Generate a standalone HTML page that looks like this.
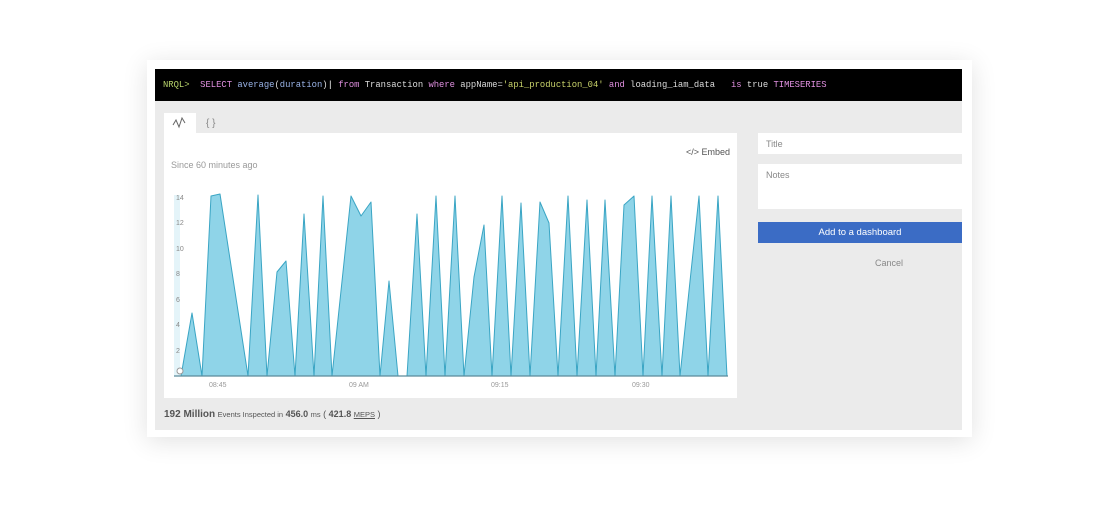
<!DOCTYPE html>
<html><head><style>
body{margin:0;width:1120px;height:529px;background:#fff;position:relative;overflow:hidden;font-family:"Liberation Sans",sans-serif}
.card{position:absolute;left:147px;top:60px;width:825px;height:377px;background:#fff;box-shadow:0 4px 24px rgba(0,0,0,.12)}
.bar{position:absolute;left:155px;top:69px;width:807px;height:32px;background:#000;font-family:"Liberation Mono",monospace;font-size:8.85px;line-height:32px;white-space:pre;color:#ddd;padding-left:8px;box-sizing:border-box}
.gray{position:absolute;left:155px;top:101px;width:807px;height:329px;background:#ebebeb}
.abs{position:absolute}
.inp{position:absolute;left:758px;width:204px;background:#fff;font-size:9px;color:#888;box-sizing:border-box;padding:6px 8px}
</style></head><body>
<div class="card"></div>
<div class="bar"><span style="color:#b7d36b">NRQL&gt;</span>  <span style="color:#e090e0">SELECT</span> <span style="color:#9ab4e8">average</span>(<span style="color:#9ab4e8">duration</span>)<span style="color:#fff">|</span> <span style="color:#e090e0">from</span> Transaction <span style="color:#e090e0">where</span> appName=<span style="color:#c9d36b">'api_production_04'</span> <span style="color:#e090e0">and</span> loading_iam_data   <span style="color:#e090e0">is</span> true <span style="color:#e090e0">TIMESERIES</span></div>
<div class="gray"></div>
<div class="abs" style="left:164px;top:113px;width:32px;height:21px;background:#fff"></div>
<svg class="abs" style="left:172px;top:117px" width="16" height="12"><path d="M1 8 L4 3 L7 10 L10 1 L13 6" fill="none" stroke="#666" stroke-width="1"/></svg>
<div class="abs" style="left:206px;top:113px;font-size:10px;color:#888;line-height:21px">{ }</div>
<div class="abs" style="left:164px;top:133px;width:573px;height:265px;background:#fff"></div>
<div class="abs" style="left:171px;top:160px;font-size:9px;color:#999">Since 60 minutes ago</div>
<div class="abs" style="left:686px;top:147px;font-size:9px;color:#555">&lt;/&gt; Embed</div>
<svg class="abs" style="left:0;top:0" width="1120" height="529">
<rect x="174" y="195" width="6" height="181" fill="#e4f4f9"/>
<polygon fill="#8fd4e8" stroke="#3aa5c4" stroke-width="1" stroke-linejoin="round" points="181,376 192,313 202,376 211,196 220,194 248,376 258,195 267,376 277,272 286,261 295,376 304,214 314,376 323,196 332,376 351,196 361,216 371,202 380,376 389,281 398,376 407,376 417,214 426,376 436,196 445,376 455,196 464,376 474,277 484,225 492,376 502,196 511,376 521,203 530,376 540,202 549,223 558,376 568,196 577,376 587,200 596,376 605,200 615,376 624,205 634,196 643,376 652,196 662,376 671,196 680,376 699,196 708,376 718,196 727,376"/>
<line x1="174" y1="376" x2="728" y2="376" stroke="#5a8a9a" stroke-width="1.2"/>
<g font-size="7" fill="#888" font-family="Liberation Sans">
<text x="176" y="200">14</text><text x="176" y="225">12</text><text x="176" y="251">10</text><text x="176" y="276">8</text><text x="176" y="302">6</text><text x="176" y="327">4</text><text x="176" y="353">2</text></g>
<g font-size="7" fill="#999" font-family="Liberation Sans">
<text x="209" y="387">08:45</text><text x="349" y="387">09 AM</text><text x="491" y="387">09:15</text><text x="632" y="387">09:30</text></g>
<circle cx="180" cy="371" r="3" fill="#fff" stroke="#999"/>
</svg>
<div class="abs" style="left:164px;top:409px;font-size:9px;color:#555"><b style="font-size:10px">192 Million</b> <span style="font-size:7.5px">Events Inspected in</span> <b>456.0</b> <span style="font-size:7.5px">ms</span> ( <b>421.8</b> <span style="font-size:7.5px;text-decoration:underline">MEPS</span> )</div>
<div class="inp" style="top:133px;height:21px">Title</div>
<div class="inp" style="top:164px;height:45px">Notes</div>
<div class="abs" style="left:758px;top:222px;width:204px;height:21px;background:#3b6cc5;color:#fff;font-size:9.5px;text-align:center;line-height:21px">Add to a dashboard</div>
<div class="abs" style="left:758px;top:258px;width:262px;font-size:9px;color:#888;text-align:center">Cancel</div>
</body></html>
